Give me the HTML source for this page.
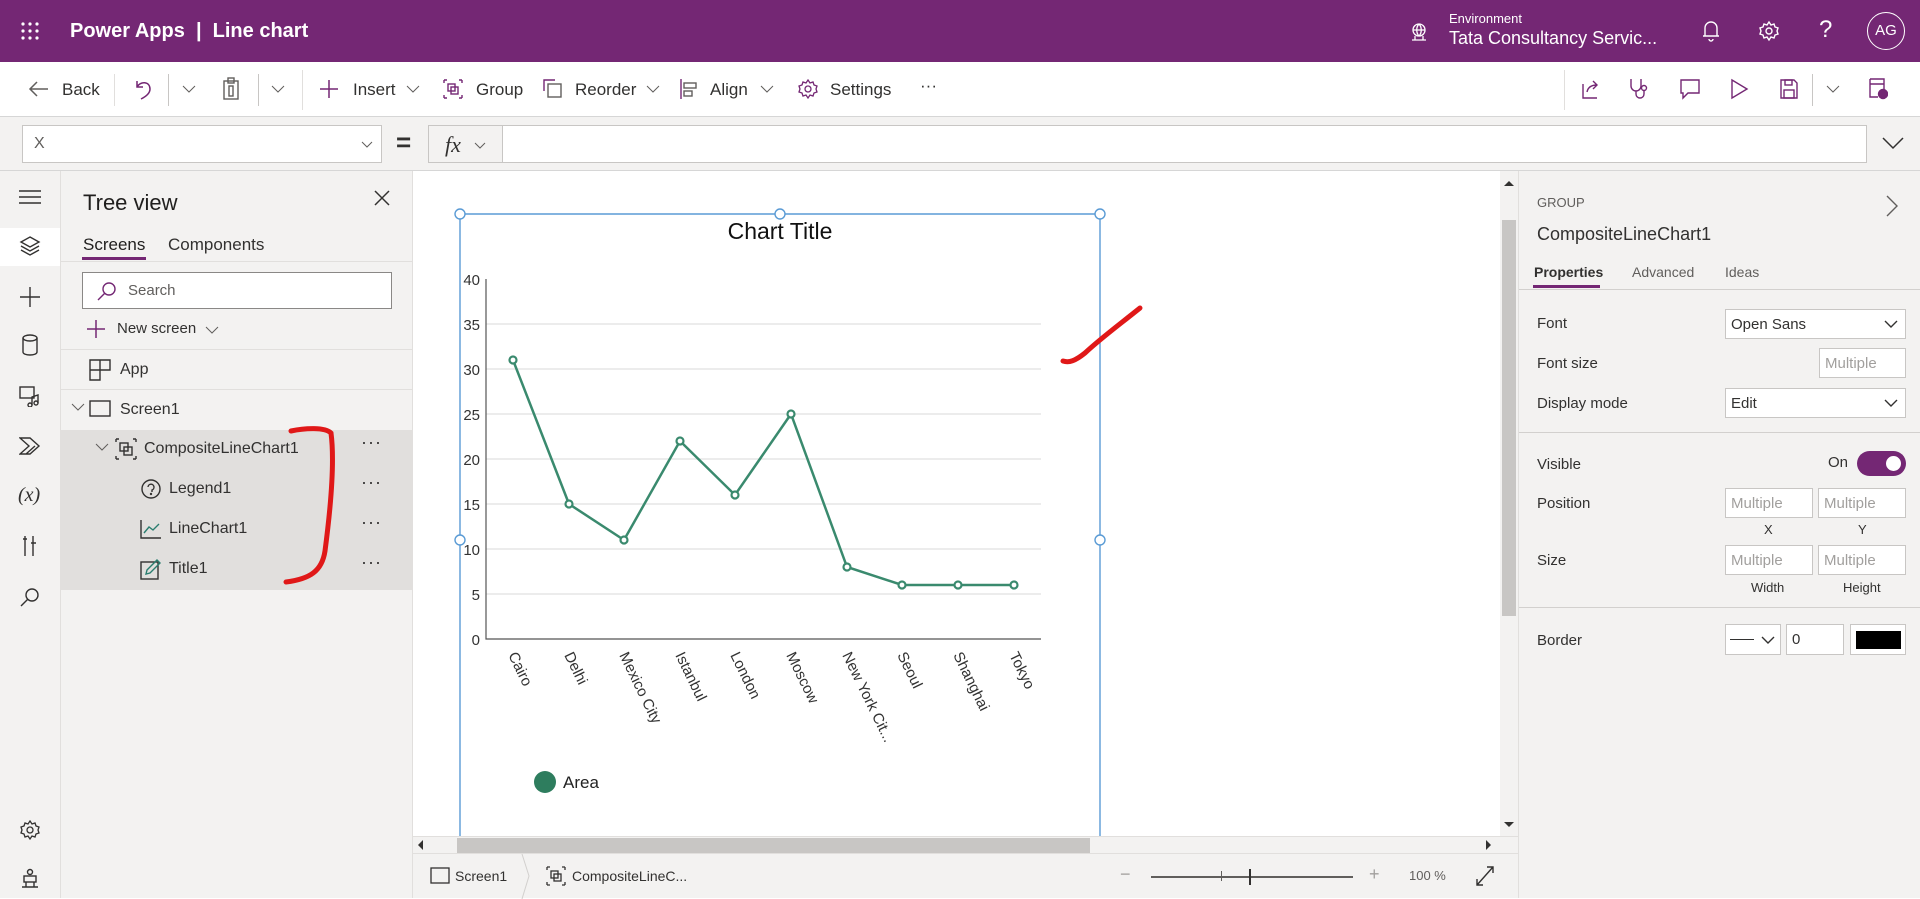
<!DOCTYPE html>
<html><head><meta charset="utf-8">
<style>
*{box-sizing:border-box;margin:0;padding:0}
body{width:1920px;height:898px;overflow:hidden;position:relative;background:#fff;font-family:"Liberation Sans",sans-serif;color:#323130}
.a{position:absolute;white-space:nowrap}
.hdr{left:0;top:0;width:1920px;height:62px;background:#742774;color:#fff}
.tb{left:0;top:62px;width:1920px;height:55px;background:#fff;border-bottom:1px solid #d6d6d6}
.fb{left:0;top:117px;width:1920px;height:54px;background:#f3f2f1;border-bottom:1px solid #d6d6d6}
.rail{left:0;top:171px;width:61px;height:727px;background:#f3f2f1;border-right:1px solid #e1dfdd}
.tree{left:61px;top:171px;width:352px;height:727px;background:#f3f2f1;border-right:1px solid #e1dfdd}
.rp{left:1518px;top:171px;width:402px;height:727px;background:#f3f2f1;border-left:1px solid #e1dfdd}
.box{background:#fff;border:1px solid #c8c6c4}
.ph{color:#a19f9d;font-size:15px}
.lbl{font-size:15px;color:#323130}
.sep{background:#e1dfdd;height:1px}
</style></head><body>
<div class="a hdr">
  <svg class="a" style="left:20px;top:21px" width="20" height="20"><g fill="#fff"><circle cx="3" cy="3" r="1.6"/><circle cx="10" cy="3" r="1.6"/><circle cx="17" cy="3" r="1.6"/><circle cx="3" cy="10" r="1.6"/><circle cx="10" cy="10" r="1.6"/><circle cx="17" cy="10" r="1.6"/><circle cx="3" cy="17" r="1.6"/><circle cx="10" cy="17" r="1.6"/><circle cx="17" cy="17" r="1.6"/></g></svg>
  <div class="a" style="left:70px;top:20px;font-size:20px;font-weight:bold">Power Apps&nbsp; | &nbsp;Line chart</div>
  <svg class="a" style="left:1409px;top:22px" width="20" height="20" fill="none" stroke="#fff" stroke-width="1.3"><circle cx="10" cy="8" r="6"/><path d="M4 8h12M10 2c-3 3-3 9 0 12M10 2c3 3 3 9 0 12M3 18h14M6 14v4M14 14v4"/></svg>
  <div class="a" style="left:1449px;top:11px;font-size:13px">Environment</div>
  <div class="a" style="left:1449px;top:28px;font-size:18px">Tata Consultancy Servic...</div>
  <svg class="a" style="left:1700px;top:19px" width="22" height="24" fill="none" stroke="#fff" stroke-width="1.4"><path d="M5 17V9a6 6 0 0 1 12 0v8zM3 17h16M9 20a2 2 0 0 0 4 0"/></svg>
  <svg class="a" style="left:1758px;top:20px" width="22" height="22" fill="none" stroke="#fff" stroke-width="1.4"><circle cx="11" cy="11" r="3"/><path d="M11 2l2 3 3-1 1 3 3 1-1 3 1 3-3 1-1 3-3-1-2 3-2-3-3 1-1-3-3-1 1-3-1-3 3-1 1-3 3 1z"/></svg>
  <div class="a" style="left:1819px;top:16px;font-size:24px;font-weight:300">?</div>
  <div class="a" style="left:1867px;top:12px;width:38px;height:38px;border:1.5px solid #fff;border-radius:50%;text-align:center;line-height:35px;font-size:15px">AG</div>
</div>
<div class="a tb" style="font-size:17px">
  <svg class="a" style="left:28px;top:17px" width="22" height="20" fill="none" stroke="#605e5c" stroke-width="1.5"><path d="M20 10H2M9 3L2 10l7 7"/></svg>
  <div class="a" style="left:62px;top:18px">Back</div>
  <div class="a" style="left:114px;top:12px;width:1px;height:32px;background:#e1dfdd"></div>
  <svg class="a" style="left:134px;top:16px" width="20" height="22" fill="none" stroke="#742774" stroke-width="1.5"><path d="M3 3v6h6M3 9c3-6 13-6 13 2 0 5-5 8-9 10"/></svg>
  <div class="a" style="left:168px;top:12px;width:1px;height:32px;background:#c8c6c4"></div>
  <svg class="a" style="left:182px;top:22px" width="14" height="10" fill="none" stroke="#605e5c"><path d="M1 2l6 6 6-6"/></svg>
  <svg class="a" style="left:222px;top:15px" width="18" height="24" fill="none" stroke="#605e5c" stroke-width="1.4"><rect x="2" y="4" width="14" height="18"/><rect x="6" y="1" width="6" height="5"/><rect x="7" y="9" width="4" height="10"/></svg>
  <div class="a" style="left:258px;top:12px;width:1px;height:32px;background:#c8c6c4"></div>
  <svg class="a" style="left:271px;top:22px" width="14" height="10" fill="none" stroke="#605e5c"><path d="M1 2l6 6 6-6"/></svg>
  <div class="a" style="left:302px;top:8px;width:1px;height:40px;background:#e1dfdd"></div>
  <svg class="a" style="left:319px;top:17px" width="20" height="20" stroke="#742774" stroke-width="1.5"><path d="M10 1v18M1 10h18"/></svg>
  <div class="a" style="left:353px;top:18px">Insert</div>
  <svg class="a" style="left:406px;top:22px" width="14" height="10" fill="none" stroke="#605e5c"><path d="M1 2l6 6 6-6"/></svg>
  <svg class="a" style="left:443px;top:17px" width="20" height="20" fill="none" stroke="#742774" stroke-width="1.4"><path d="M1 1h3M1 1v3M19 1h-3M19 1v3M1 19h3M1 19v-3M19 19h-3M19 19v-3"/><rect x="5" y="5" width="7" height="7"/><rect x="8" y="8" width="7" height="7"/></svg>
  <div class="a" style="left:476px;top:18px">Group</div>
  <svg class="a" style="left:543px;top:17px" width="20" height="20" fill="none" stroke="#742774" stroke-width="1.4"><path d="M1 12V1h11"/><rect x="5" y="5" width="13" height="13" stroke="#605e5c"/></svg>
  <div class="a" style="left:575px;top:18px">Reorder</div>
  <svg class="a" style="left:646px;top:22px" width="14" height="10" fill="none" stroke="#605e5c"><path d="M1 2l6 6 6-6"/></svg>
  <svg class="a" style="left:679px;top:16px" width="20" height="22" fill="none" stroke="#742774" stroke-width="1.4"><path d="M2 1v20"/><rect x="5" y="5" width="12" height="5" stroke="#605e5c"/><rect x="5" y="13" width="8" height="5" stroke="#605e5c"/></svg>
  <div class="a" style="left:710px;top:18px">Align</div>
  <svg class="a" style="left:760px;top:22px" width="14" height="10" fill="none" stroke="#605e5c"><path d="M1 2l6 6 6-6"/></svg>
  <svg class="a" style="left:797px;top:16px" width="22" height="22" fill="none" stroke="#742774" stroke-width="1.3"><circle cx="11" cy="11" r="3"/><path d="M11 2l2 3 3-1 1 3 3 1-1 3 1 3-3 1-1 3-3-1-2 3-2-3-3 1-1-3-3-1 1-3-1-3 3-1 1-3 3 1z"/></svg>
  <div class="a" style="left:830px;top:18px">Settings</div>
  <div class="a" style="left:920px;top:14px;font-size:17px">···</div>
  <div class="a" style="left:1564px;top:8px;width:1px;height:40px;background:#e1dfdd"></div>
  <svg class="a" style="left:1580px;top:16px" width="20" height="22" fill="none" stroke="#742774" stroke-width="1.4"><path d="M3 6v14h14M7 14c1-5 5-7 10-7M13 3l4 4-4 4"/></svg>
  <svg class="a" style="left:1628px;top:15px" width="22" height="24" fill="none" stroke="#742774" stroke-width="1.4"><path d="M3 2v7a5 5 0 0 0 10 0V2M8 14v3a4 4 0 0 0 8 0v-4"/><circle cx="16" cy="11" r="2.5"/></svg>
  <svg class="a" style="left:1679px;top:16px" width="22" height="22" fill="none" stroke="#742774" stroke-width="1.4"><path d="M2 2h18v13H9l-5 5v-5H2z"/></svg>
  <svg class="a" style="left:1729px;top:16px" width="20" height="22" fill="none" stroke="#742774" stroke-width="1.4"><path d="M3 2l15 9-15 9z"/></svg>
  <svg class="a" style="left:1779px;top:16px" width="20" height="22" fill="none" stroke="#742774" stroke-width="1.4"><path d="M2 2h13l3 3v15H2z"/><rect x="6" y="2" width="7" height="5"/><rect x="5" y="12" width="10" height="8"/></svg>
  <div class="a" style="left:1812px;top:12px;width:1px;height:32px;background:#c8c6c4"></div>
  <svg class="a" style="left:1826px;top:22px" width="14" height="10" fill="none" stroke="#605e5c"><path d="M1 2l6 6 6-6"/></svg>
  <svg class="a" style="left:1868px;top:15px" width="20" height="24" fill="none" stroke="#742774" stroke-width="1.4"><path d="M2 2h14v10M2 2v18h8M2 7h14"/><circle cx="15" cy="17" r="4.5" fill="#742774"/></svg>
</div>
<div class="a fb">
  <div class="a box" style="left:22px;top:8px;width:360px;height:38px"><span class="a" style="left:11px;top:9px;font-size:16px;color:#605e5c">X</span>
    <svg class="a" style="left:338px;top:15px" width="12" height="8" fill="none" stroke="#605e5c"><path d="M1 1l5 5 5-5"/></svg></div>
  <div class="a" style="left:396px;top:10px;font-size:26px;font-weight:bold">=</div>
  <div class="a" style="left:428px;top:8px;width:75px;height:38px;background:#f3f2f1;border:1px solid #c8c6c4"><span class="a" style="left:16px;top:6px;font-family:'Liberation Serif',serif;font-style:italic;font-size:22px">fx</span>
    <svg class="a" style="left:45px;top:16px" width="12" height="8" fill="none" stroke="#605e5c"><path d="M1 1l5 5 5-5"/></svg></div>
  <div class="a box" style="left:502px;top:8px;width:1365px;height:38px"></div>
  <svg class="a" style="left:1882px;top:19px" width="22" height="14" fill="none" stroke="#323130" stroke-width="1.5"><path d="M1 2l10 10 10-10"/></svg>
</div>
<div class="a rail">
  <div class="a" style="left:0;top:57px;width:60px;height:38px;background:#fff"></div>
  <svg class="a" style="left:18px;top:18px" width="24" height="16" stroke="#323130" stroke-width="1.4"><path d="M1 2h22M1 8h22M1 14h22"/></svg>
  <svg class="a" style="left:19px;top:64px" width="22" height="22" fill="none" stroke="#323130" stroke-width="1.4"><path d="M11 2l9 5-9 5-9-5zM2 11l9 5 9-5M2 15l9 5 9-5"/></svg>
  <svg class="a" style="left:19px;top:115px" width="22" height="22" stroke="#323130" stroke-width="1.4"><path d="M11 1v20M1 11h20"/></svg>
  <svg class="a" style="left:21px;top:163px" width="18" height="22" fill="none" stroke="#323130" stroke-width="1.4"><ellipse cx="9" cy="4" rx="7" ry="3"/><path d="M2 4v14c0 4 14 4 14 0V4"/></svg>
  <svg class="a" style="left:19px;top:214px" width="22" height="22" fill="none" stroke="#323130" stroke-width="1.4"><rect x="1" y="2" width="14" height="11"/><path d="M13 20v-8l6-2v8"/><circle cx="11" cy="20" r="2"/><circle cx="17" cy="18" r="2"/></svg>
  <svg class="a" style="left:19px;top:265px" width="22" height="20" fill="none" stroke="#323130" stroke-width="1.4"><path d="M1 2h10l9 8-9 8H1l9-8zM7 18l9-8"/></svg>
  <div class="a" style="left:18px;top:313px;font-family:'Liberation Serif',serif;font-style:italic;font-size:20px">(x)</div>
  <svg class="a" style="left:21px;top:364px" width="18" height="22" fill="none" stroke="#323130" stroke-width="1.4"><path d="M4 1v20M12 1v20M2 4h4M10 8h5"/></svg>
  <svg class="a" style="left:20px;top:416px" width="20" height="20" fill="none" stroke="#323130" stroke-width="1.4"><circle cx="12" cy="8" r="6"/><path d="M8 12L1 19"/></svg>
  <svg class="a" style="left:19px;top:648px" width="22" height="22" fill="none" stroke="#323130" stroke-width="1.3"><circle cx="11" cy="11" r="3"/><path d="M11 2l2 3 3-1 1 3 3 1-1 3 1 3-3 1-1 3-3-1-2 3-2-3-3 1-1-3-3-1 1-3-1-3 3-1 1-3 3 1z"/></svg>
  <svg class="a" style="left:20px;top:697px" width="20" height="22" fill="none" stroke="#323130" stroke-width="1.4"><circle cx="10" cy="4" r="2.5"/><rect x="4" y="8" width="12" height="6"/><path d="M10 1v1M2 19h16M6 14v5M14 14v5"/></svg>
</div>
<div class="a tree">
  <div class="a" style="left:22px;top:19px;font-size:22px;color:#201f1e">Tree view</div>
  <svg class="a" style="left:312px;top:18px" width="18" height="18" stroke="#323130" stroke-width="1.5"><path d="M2 2l14 14M16 2L2 16"/></svg>
  <div class="a" style="left:22px;top:64px;font-size:17px;color:#201f1e">Screens</div>
  <div class="a" style="left:21px;top:86px;width:64px;height:3px;background:#742774"></div>
  <div class="a" style="left:107px;top:64px;font-size:17px;color:#323130">Components</div>
  <div class="a sep" style="left:0;top:90px;width:352px"></div>
  <div class="a box" style="left:21px;top:101px;width:310px;height:37px;border-color:#8a8886"><svg class="a" style="left:14px;top:8px" width="20" height="20" fill="none" stroke="#742774" stroke-width="1.4"><circle cx="12" cy="8" r="6"/><path d="M8 12L1 19"/></svg><span class="a" style="left:45px;top:9px;font-size:15px;color:#605e5c">Search</span></div>
  <svg class="a" style="left:25px;top:148px" width="20" height="20" stroke="#742774" stroke-width="1.5"><path d="M10 1v18M1 10h18"/></svg>
  <div class="a" style="left:56px;top:149px;font-size:15px">New screen</div>
  <svg class="a" style="left:144px;top:155px" width="14" height="9" fill="none" stroke="#605e5c"><path d="M1 1l6 6 6-6"/></svg>
  <div class="a sep" style="left:0;top:178px;width:352px"></div>
  <svg class="a" style="left:28px;top:188px" width="22" height="22" fill="none" stroke="#323130" stroke-width="1.4"><path d="M1 1h20v10H11v10H1zM1 11h10M11 1v10"/></svg>
  <div class="a" style="left:59px;top:190px;font-size:16px">App</div>
  <div class="a sep" style="left:0;top:218px;width:352px"></div>
  <svg class="a" style="left:10px;top:232px" width="14" height="9" fill="none" stroke="#605e5c"><path d="M1 1l6 6 6-6"/></svg>
  <svg class="a" style="left:28px;top:229px" width="22" height="18" fill="none" stroke="#323130" stroke-width="1.4"><rect x="1" y="1" width="20" height="15"/></svg>
  <div class="a" style="left:59px;top:230px;font-size:16px">Screen1</div>
  <div class="a" style="left:0;top:259px;width:352px;height:160px;background:#e1dfdd"></div>
  <svg class="a" style="left:34px;top:272px" width="14" height="9" fill="none" stroke="#605e5c"><path d="M1 1l6 6 6-6"/></svg>
  <svg class="a" style="left:54px;top:267px" width="22" height="22" fill="none" stroke="#323130" stroke-width="1.4"><path d="M1 1h3M1 1v3M21 1h-3M21 1v3M1 21h3M1 21v-3M21 21h-3M21 21v-3"/><rect x="5" y="5" width="8" height="8"/><rect x="9" y="9" width="8" height="8"/></svg>
  <div class="a" style="left:83px;top:269px;font-size:16px">CompositeLineChart1</div>
  <svg class="a" style="left:79px;top:307px" width="22" height="22" fill="none" stroke="#323130" stroke-width="1.4"><circle cx="11" cy="11" r="9"/><path d="M8 9a3 3 0 1 1 4 3v2"/><circle cx="11" cy="16" r=".5"/></svg>
  <div class="a" style="left:108px;top:309px;font-size:16px">Legend1</div>
  <svg class="a" style="left:79px;top:348px" width="22" height="20" fill="none" stroke="#323130" stroke-width="1.4"><path d="M1 1v18h20"/><path d="M4 14l5-6 4 3 6-6" stroke="#2a7d6f"/></svg>
  <div class="a" style="left:108px;top:349px;font-size:16px">LineChart1</div>
  <svg class="a" style="left:79px;top:387px" width="22" height="22" fill="none" stroke="#323130" stroke-width="1.4"><rect x="1" y="4" width="17" height="17"/><path d="M6 16l1-4 10-10 3 3-10 10z" stroke="#2a7d6f"/></svg>
  <div class="a" style="left:108px;top:389px;font-size:16px">Title1</div>
  <div class="a" style="left:300px;top:261px;font-size:18px;letter-spacing:1px">···</div>
  <div class="a" style="left:300px;top:301px;font-size:18px;letter-spacing:1px">···</div>
  <div class="a" style="left:300px;top:341px;font-size:18px;letter-spacing:1px">···</div>
  <div class="a" style="left:300px;top:381px;font-size:18px;letter-spacing:1px">···</div>
</div>
<!-- canvas scrollbars -->
<div class="a" style="left:1500px;top:171px;width:18px;height:665px;background:#f3f2f1"></div>
<div class="a" style="left:1502px;top:220px;width:14px;height:396px;background:#c8c6c4"></div>
<div class="a" style="left:1504px;top:181px;width:0;height:0;border-left:5px solid transparent;border-right:5px solid transparent;border-bottom:5px solid #323130"></div>
<div class="a" style="left:1504px;top:822px;width:0;height:0;border-left:5px solid transparent;border-right:5px solid transparent;border-top:5px solid #323130"></div>
<div class="a" style="left:413px;top:836px;width:1105px;height:17px;background:#f3f2f1;border-top:1px solid #e1dfdd"></div>
<div class="a" style="left:457px;top:838px;width:633px;height:15px;background:#c8c6c4"></div>
<div class="a" style="left:418px;top:840px;width:0;height:0;border-top:5px solid transparent;border-bottom:5px solid transparent;border-right:5px solid #323130"></div>
<div class="a" style="left:1486px;top:840px;width:0;height:0;border-top:5px solid transparent;border-bottom:5px solid transparent;border-left:5px solid #323130"></div>
<div class="a" style="left:413px;top:853px;width:1105px;height:45px;background:#f3f2f1;border-top:1px solid #e1dfdd">
  <svg class="a" style="left:17px;top:13px" width="20" height="18" fill="none" stroke="#323130" stroke-width="1.3"><rect x="1" y="1" width="18" height="15"/></svg>
  <div class="a" style="left:42px;top:14px;font-size:14px">Screen1</div>
  <svg class="a" style="left:108px;top:0" width="10" height="45" fill="none" stroke="#d2d0ce"><path d="M1 0l7 22-7 23"/></svg>
  <svg class="a" style="left:133px;top:12px" width="20" height="20" fill="none" stroke="#323130" stroke-width="1.3"><path d="M1 1h3M1 1v3M19 1h-3M19 1v3M1 19h3M1 19v-3M19 19h-3M19 19v-3"/><rect x="5" y="5" width="7" height="7"/><rect x="8" y="8" width="7" height="7"/></svg>
  <div class="a" style="left:159px;top:14px;font-size:14px">CompositeLineC...</div>
  <div class="a" style="left:707px;top:10px;font-size:18px;color:#a19f9d">−</div>
  <div class="a" style="left:738px;top:22px;width:202px;height:2px;background:#605e5c"></div>
  <div class="a" style="left:836px;top:15px;width:2px;height:16px;background:#323130"></div>
  <div class="a" style="left:808px;top:17px;width:1px;height:10px;background:#605e5c"></div>
  <div class="a" style="left:956px;top:10px;font-size:18px;color:#a19f9d">+</div>
  <div class="a" style="left:996px;top:14px;font-size:13px;color:#605e5c">100 %</div>
  <svg class="a" style="left:1062px;top:11px" width="20" height="22" fill="none" stroke="#323130" stroke-width="1.4"><path d="M2 20L18 2M12 2h6v6M2 14v6h6"/></svg>
</div>
<!-- chart overlay -->
<svg class="a" style="left:0;top:0" width="1920" height="898" font-family="Liberation Sans, sans-serif">
  <g stroke="#e1e1e1" stroke-width="1.2">
    <line x1="486" x2="1041" y1="324" y2="324"/><line x1="486" x2="1041" y1="369" y2="369"/><line x1="486" x2="1041" y1="414" y2="414"/><line x1="486" x2="1041" y1="459" y2="459"/><line x1="486" x2="1041" y1="504" y2="504"/><line x1="486" x2="1041" y1="549" y2="549"/><line x1="486" x2="1041" y1="594" y2="594"/>
  </g>
  <path d="M486 279V639H1041" fill="none" stroke="#555" stroke-width="1.2"/>
  <g font-size="15" fill="#333" text-anchor="end">
    <text x="480" y="285">40</text><text x="480" y="330">35</text><text x="480" y="375">30</text><text x="480" y="420">25</text><text x="480" y="465">20</text><text x="480" y="510">15</text><text x="480" y="555">10</text><text x="480" y="600">5</text><text x="480" y="645">0</text>
  </g>
  <text x="780" y="239" font-size="23" text-anchor="middle" fill="#111">Chart Title</text>
  <polyline fill="none" stroke="#3a8a6e" stroke-width="2.5" points="513,360 569,504 624,540 680,441 735,495 791,414 847,567 902,585 958,585 1014,585"/>
  <g fill="#fff" stroke="#3a8a6e" stroke-width="2.2">
    <circle cx="513" cy="360" r="3.5"/><circle cx="569" cy="504" r="3.5"/><circle cx="624" cy="540" r="3.5"/><circle cx="680" cy="441" r="3.5"/><circle cx="735" cy="495" r="3.5"/><circle cx="791" cy="414" r="3.5"/><circle cx="847" cy="567" r="3.5"/><circle cx="902" cy="585" r="3.5"/><circle cx="958" cy="585" r="3.5"/><circle cx="1014" cy="585" r="3.5"/>
  </g>
  <g font-size="15" fill="#333">
    <text transform="translate(508,655) rotate(64)">Cairo</text>
    <text transform="translate(564,655) rotate(64)">Delhi</text>
    <text transform="translate(619,655) rotate(64)">Mexico City</text>
    <text transform="translate(675,655) rotate(64)">Istanbul</text>
    <text transform="translate(730,655) rotate(64)">London</text>
    <text transform="translate(786,655) rotate(64)">Moscow</text>
    <text transform="translate(842,655) rotate(64)">New York Cit...</text>
    <text transform="translate(897,655) rotate(64)">Seoul</text>
    <text transform="translate(953,655) rotate(64)">Shanghai</text>
    <text transform="translate(1009,655) rotate(64)">Tokyo</text>
  </g>
  <circle cx="545" cy="782" r="11" fill="#2e7d5e"/>
  <text x="563" y="788" font-size="17" fill="#222">Area</text>
  <path d="M460 214H1100M460 214V836M1100 214V836" fill="none" stroke="#5a9bd5" stroke-width="1.4"/>
  <g fill="#fff" stroke="#5a9bd5" stroke-width="1.4">
    <circle cx="460" cy="214" r="5"/><circle cx="780" cy="214" r="5"/><circle cx="1100" cy="214" r="5"/><circle cx="460" cy="540" r="5"/><circle cx="1100" cy="540" r="5"/>
  </g>
  <path d="M1063 361c6 2 12 0 22-8 15-14 30-25 55-45" fill="none" stroke="#e01818" stroke-width="5" stroke-linecap="round"/>
  <path d="M291 431c14-3 34-4 40 2 4 30-1 80-6 118-3 20-15 28-39 31" fill="none" stroke="#e01818" stroke-width="5" stroke-linecap="round"/>
</svg>
<div class="a rp">
  <div class="a" style="left:18px;top:24px;font-size:13px;color:#605e5c">GROUP</div>
  <svg class="a" style="left:367px;top:24px" width="12" height="22" fill="none" stroke="#605e5c" stroke-width="1.4"><path d="M1 1l10 10-10 10"/></svg>
  <div class="a" style="left:18px;top:53px;font-size:18px;color:#323130">CompositeLineChart1</div>
  <div class="a" style="left:15px;top:93px;font-size:14px;font-weight:bold">Properties</div>
  <div class="a" style="left:14px;top:114px;width:67px;height:3px;background:#742774"></div>
  <div class="a" style="left:113px;top:93px;font-size:14px;color:#605e5c">Advanced</div>
  <div class="a" style="left:206px;top:93px;font-size:14px;color:#605e5c">Ideas</div>
  <div class="a sep" style="left:0;top:118px;width:402px;background:#d2d0ce"></div>
  <div class="a lbl" style="left:18px;top:144px">Font</div>
  <div class="a box" style="left:206px;top:138px;width:181px;height:30px"><span class="a" style="left:5px;top:6px;font-size:15px">Open Sans</span><svg class="a" style="left:158px;top:10px" width="14" height="9" fill="none" stroke="#323130" stroke-width="1.4"><path d="M1 1l6 6 6-6"/></svg></div>
  <div class="a lbl" style="left:18px;top:184px">Font size</div>
  <div class="a box" style="left:300px;top:177px;width:87px;height:30px"><span class="a ph" style="left:5px;top:6px">Multiple</span></div>
  <div class="a lbl" style="left:18px;top:224px">Display mode</div>
  <div class="a box" style="left:206px;top:217px;width:181px;height:30px"><span class="a" style="left:5px;top:6px;font-size:15px">Edit</span><svg class="a" style="left:158px;top:10px" width="14" height="9" fill="none" stroke="#323130" stroke-width="1.4"><path d="M1 1l6 6 6-6"/></svg></div>
  <div class="a sep" style="left:0;top:261px;width:402px;background:#d2d0ce"></div>
  <div class="a lbl" style="left:18px;top:285px">Visible</div>
  <div class="a lbl" style="left:309px;top:283px">On</div>
  <div class="a" style="left:338px;top:280px;width:49px;height:25px;border-radius:13px;background:#742774"><div class="a" style="left:29px;top:5px;width:15px;height:15px;border-radius:50%;background:#fff"></div></div>
  <div class="a lbl" style="left:18px;top:324px">Position</div>
  <div class="a box" style="left:206px;top:317px;width:88px;height:30px"><span class="a ph" style="left:5px;top:6px">Multiple</span></div>
  <div class="a box" style="left:299px;top:317px;width:88px;height:30px"><span class="a ph" style="left:5px;top:6px">Multiple</span></div>
  <div class="a" style="left:245px;top:351px;font-size:13px">X</div>
  <div class="a" style="left:339px;top:351px;font-size:13px">Y</div>
  <div class="a lbl" style="left:18px;top:381px">Size</div>
  <div class="a box" style="left:206px;top:374px;width:88px;height:30px"><span class="a ph" style="left:5px;top:6px">Multiple</span></div>
  <div class="a box" style="left:299px;top:374px;width:88px;height:30px"><span class="a ph" style="left:5px;top:6px">Multiple</span></div>
  <div class="a" style="left:232px;top:409px;font-size:13px">Width</div>
  <div class="a" style="left:324px;top:409px;font-size:13px">Height</div>
  <div class="a sep" style="left:0;top:436px;width:402px;background:#d2d0ce"></div>
  <div class="a lbl" style="left:18px;top:461px">Border</div>
  <div class="a box" style="left:206px;top:453px;width:56px;height:31px"><div class="a" style="left:4px;top:14px;width:24px;height:1px;background:#323130"></div><svg class="a" style="left:35px;top:11px" width="14" height="9" fill="none" stroke="#323130" stroke-width="1.4"><path d="M1 1l6 6 6-6"/></svg></div>
  <div class="a box" style="left:267px;top:453px;width:58px;height:31px"><span class="a" style="left:5px;top:6px;font-size:15px">0</span></div>
  <div class="a box" style="left:331px;top:453px;width:56px;height:31px"><div class="a" style="left:5px;top:6px;width:45px;height:18px;background:#000"></div></div>
</div>
</body></html>
